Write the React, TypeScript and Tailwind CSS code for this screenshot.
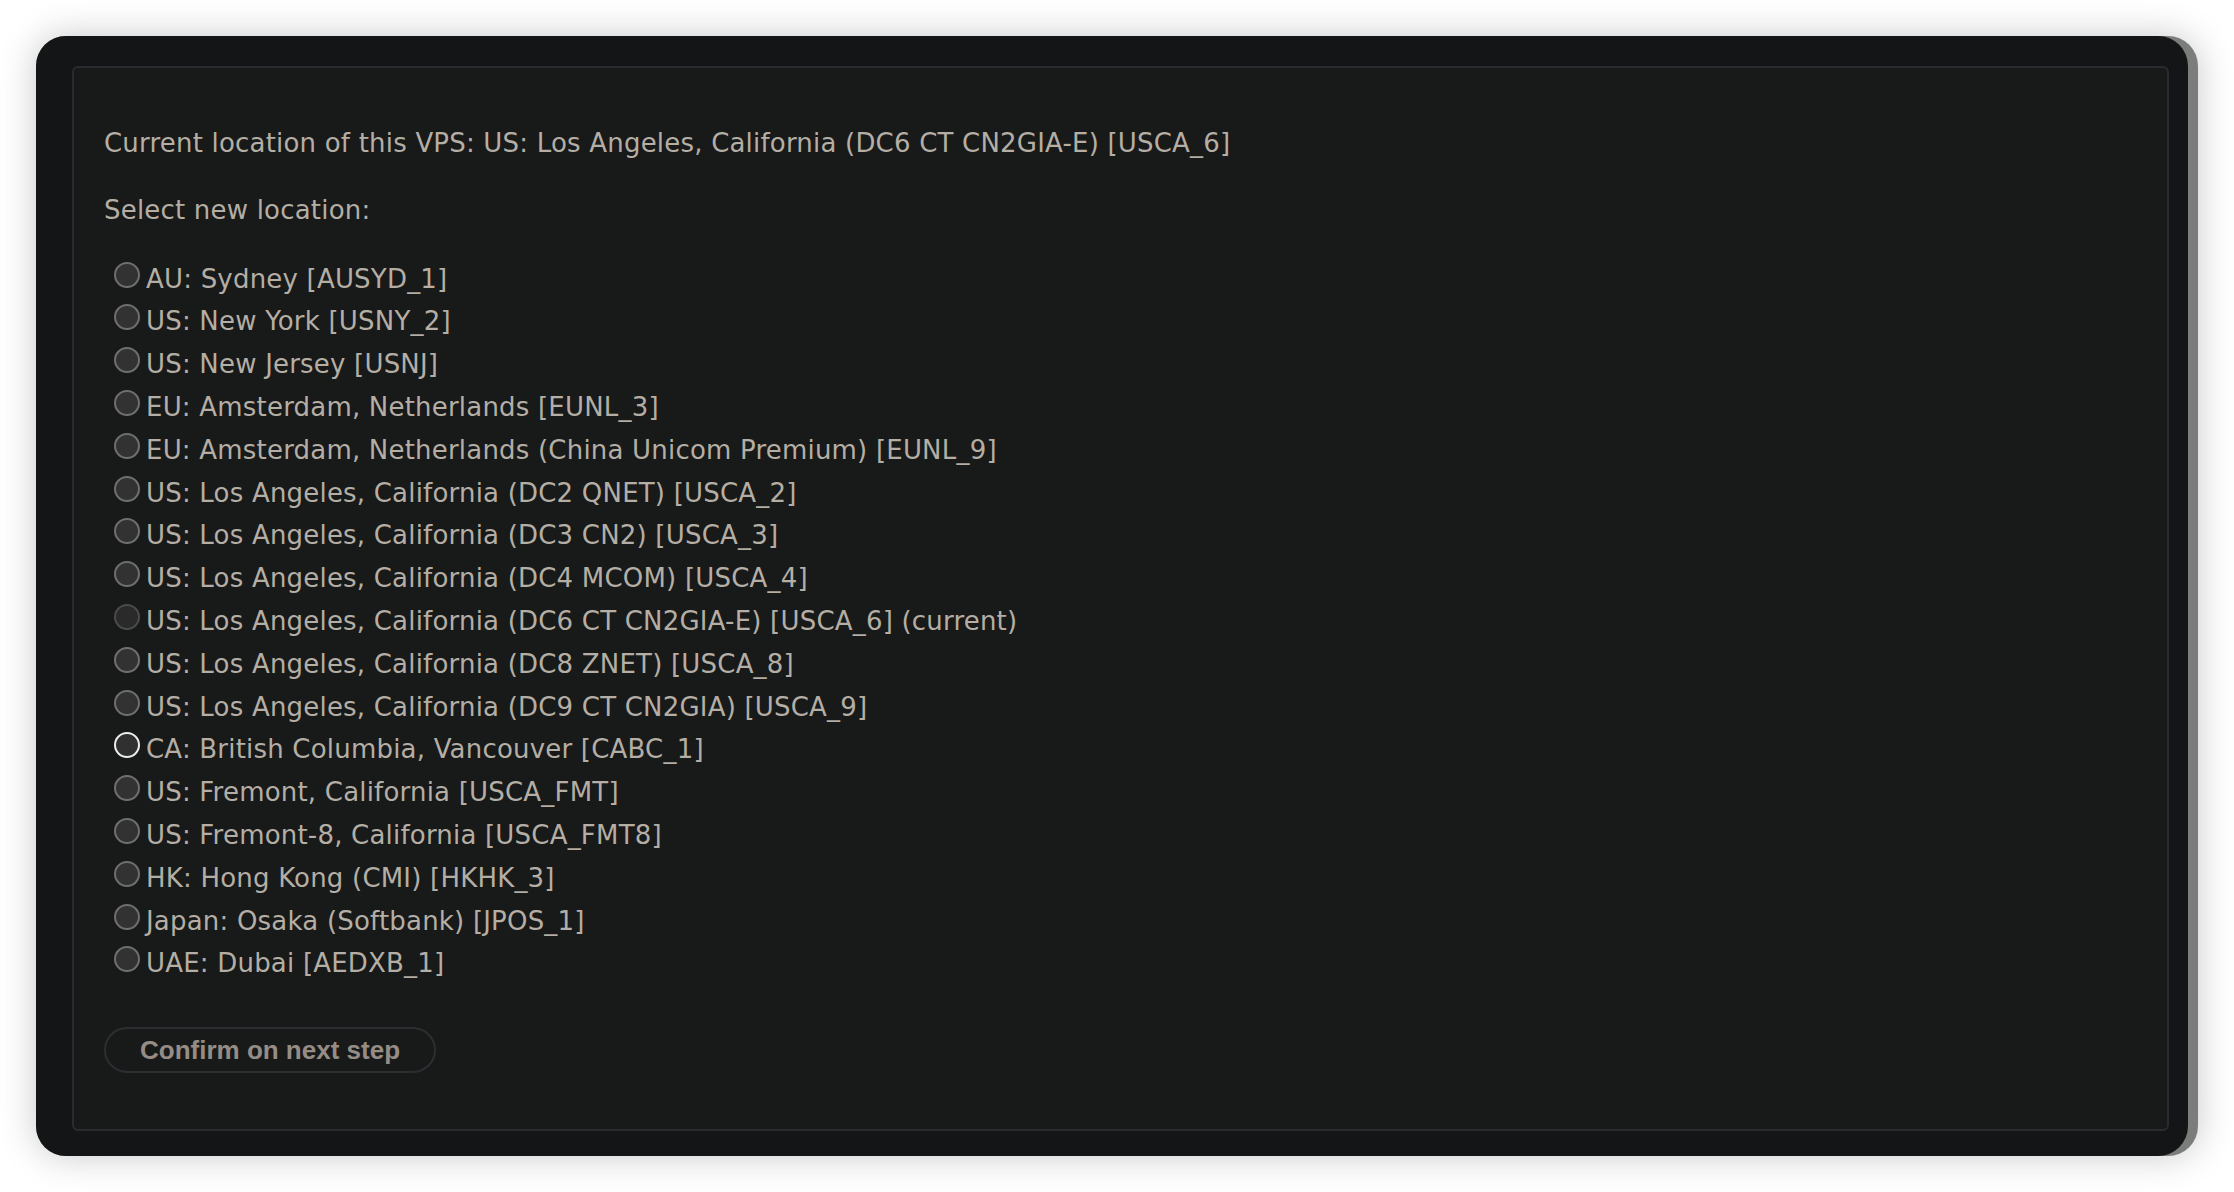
const locations = [
  { id: "AUSYD_1", label: "AU: Sydney [AUSYD_1]" },
  { id: "USNY_2", label: "US: New York [USNY_2]" },
  { id: "USNJ", label: "US: New Jersey [USNJ]" },
  { id: "EUNL_3", label: "EU: Amsterdam, Netherlands [EUNL_3]" },
  { id: "EUNL_9", label: "EU: Amsterdam, Netherlands (China Unicom Premium) [EUNL_9]" },
  { id: "USCA_2", label: "US: Los Angeles, California (DC2 QNET) [USCA_2]" },
  { id: "USCA_3", label: "US: Los Angeles, California (DC3 CN2) [USCA_3]" },
  { id: "USCA_4", label: "US: Los Angeles, California (DC4 MCOM) [USCA_4]" },
  { id: "USCA_6", label: "US: Los Angeles, California (DC6 CT CN2GIA-E) [USCA_6] (current)", disabled: true },
  { id: "USCA_8", label: "US: Los Angeles, California (DC8 ZNET) [USCA_8]" },
  { id: "USCA_9", label: "US: Los Angeles, California (DC9 CT CN2GIA) [USCA_9]" },
  { id: "CABC_1", label: "CA: British Columbia, Vancouver [CABC_1]", focused: true },
  { id: "USCA_FMT", label: "US: Fremont, California [USCA_FMT]" },
  { id: "USCA_FMT8", label: "US: Fremont-8, California [USCA_FMT8]" },
  { id: "HKHK_3", label: "HK: Hong Kong (CMI) [HKHK_3]" },
  { id: "JPOS_1", label: "Japan: Osaka (Softbank) [JPOS_1]" },
  { id: "AEDXB_1", label: "UAE: Dubai [AEDXB_1]" },
];

const Radio = ({ disabled, focused }: { disabled?: boolean; focused?: boolean }) => {
  // bottom edge sits on the text baseline, like a native radio
  if (disabled)
    return <span className="inline-block align-baseline w-[26px] h-[26px] ml-[10px] mr-[6px] rounded-full border-2 border-[#4a4b4b] bg-[#2a2a2a]" />;
  if (focused)
    return <span className="inline-block align-baseline w-[26px] h-[26px] ml-[10px] mr-[6px] rounded-full border-2 border-[#ececec] bg-[#303030]" />;
  return <span className="inline-block align-baseline w-[26px] h-[26px] ml-[10px] mr-[6px] rounded-full border-2 border-[#6f6f6f] bg-[#323232]" />;
};

export default function App() {
  return (
    <div className="min-h-screen bg-white p-[36px]">
      <div className="w-[2162px] rounded-[30px] bg-[#7b7d7b] shadow-[0_0_36px_rgba(0,0,0,0.22)]">
        <div className="w-[2152px] rounded-[30px] bg-[#141517] pl-[36px] pr-[19px] pt-[30px] pb-[25px]">
          <div
            className="rounded-[6px] border-2 border-[#2a2b2e] bg-[#181919] pl-[30px] pt-[60px] pb-[56px] text-[26px] leading-[30px] tracking-[0.2px] text-[#b4aea5]"
            style={{ fontFamily: '"DejaVu Sans", Verdana, sans-serif' }}
          >
            <p>Current location of this VPS: US: Los Angeles, California (DC6 CT CN2GIA-E) [USCA_6]</p>
            <p className="mt-[37px]">Select new location:</p>

            <div className="mt-[32.6px]">
              {locations.map((loc) => (
                <div key={loc.id} className="h-[42.8px] leading-[42.8px] whitespace-nowrap">
                  <Radio disabled={loc.disabled} focused={loc.focused} />
                  <span>{loc.label}</span>
                </div>
              ))}
            </div>

            <button
              className="mt-[42px] flex h-[46px] w-[332px] items-center rounded-full border-2 border-[#2d2e32] bg-[#181919] pl-[34px] text-[26px] font-bold tracking-normal text-[#958d85]"
              style={{ fontFamily: '"Liberation Sans", Arial, sans-serif' }}
            >
              Confirm on next step
            </button>
          </div>
        </div>
      </div>
    </div>
  );
}
